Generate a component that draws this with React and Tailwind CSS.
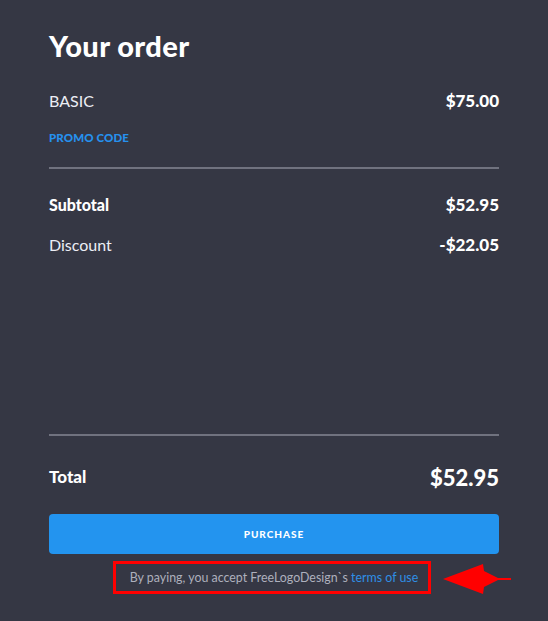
import React from "react";

const Row = ({ label, value, labelClass, valueClass, className }) => (
    <div className={`flex justify-between items-center ${className}`}>
        <span className={labelClass}>{label}</span>
        <span className={valueClass}>{value}</span>
    </div>
);

export default function App() {
    return (
        <div
            className="w-[548px] h-[621px] bg-[#353744] text-white px-[49px] pt-[30px] overflow-hidden"
            style={{ fontFamily: "Lato, 'Noto Sans', sans-serif" }}
        >
            <h1 className="text-[29px] leading-[32px] font-black tracking-[0.4px]">Your order</h1>

            <Row
                className="mt-[27px] h-[24px]"
                label="BASIC"
                value="$75.00"
                labelClass="text-[16px] font-normal text-[#eceef5]"
                valueClass="text-[17px] font-black"
            />

            <div className="mt-[17px] h-[16px] leading-[16px] text-[11.5px] font-black text-[#2691ee] tracking-[0.1px]">
                PROMO CODE
            </div>

            <div className="mt-[21px] h-[2px] bg-[#70727f]" />

            <Row
                className="mt-[24px] h-[24px]"
                label="Subtotal"
                value="$52.95"
                labelClass="text-[16px] font-black"
                valueClass="text-[17px] font-black"
            />
            <Row
                className="mt-[16px] h-[24px]"
                label="Discount"
                value="-$22.05"
                labelClass="text-[16px] font-normal text-[#eceef5]"
                valueClass="text-[17px] font-black"
            />

            <div className="mt-[177px] h-[2px] bg-[#70727f]" />

            <Row
                className="mt-[27px] h-[28px]"
                label="Total"
                value="$52.95"
                labelClass="text-[17px] font-black"
                valueClass="text-[22px] font-black"
            />

            <button className="mt-[23px] w-full h-[40px] rounded-[4px] bg-[#2394ef] text-white text-[10px] font-black tracking-[1px]">
                PURCHASE
            </button>

            {/* terms line with the red annotation */}
            <div className="relative mt-[7px] h-[33px] flex items-center justify-center">
                <p className="text-[12.4px] text-[#aeb0bd] leading-[16px]">
                    By paying, you accept FreeLogoDesign`s{" "}
                    <a href="#" className="text-[#2f8fe6]">terms of use</a>
                </p>
                <div className="absolute left-[64px] top-0 w-[318px] h-[33px] border-[3px] border-[#ff0000]" />
                <svg
                    className="absolute left-[393px] top-0"
                    width="70"
                    height="36"
                    viewBox="0 0 70 36"
                >
                    <polygon points="1,18 41,3 42,10 56,17 56,19 42,26 41,33" fill="#ff0000" />
                    <rect x="50" y="17" width="19" height="2" fill="#ff0000" />
                </svg>
            </div>
        </div>
    );
}
